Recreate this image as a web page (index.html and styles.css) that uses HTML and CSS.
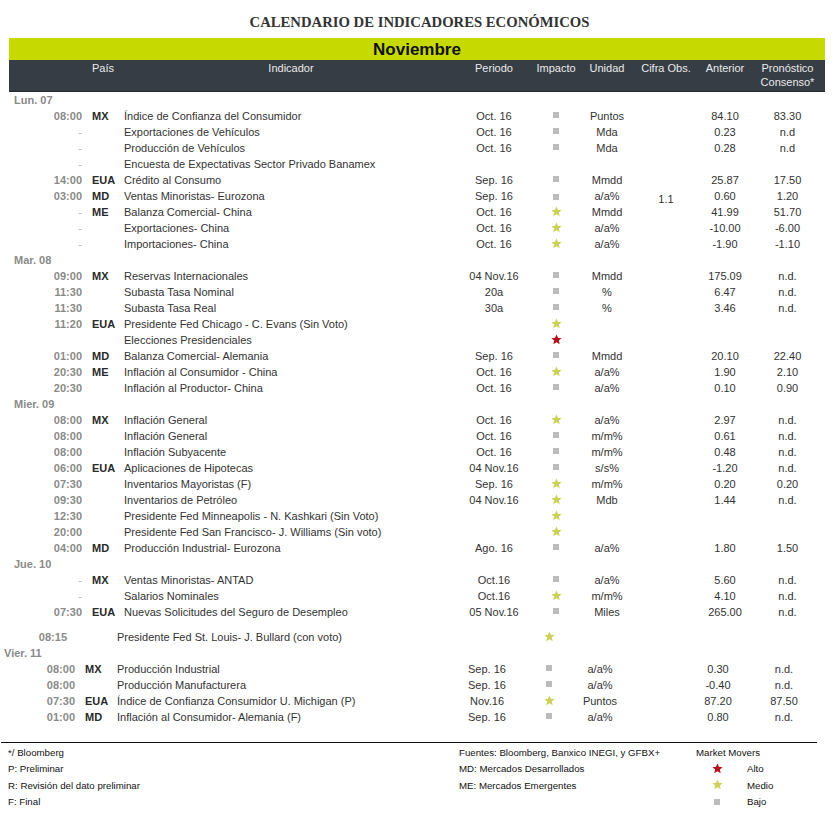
FILE: index.html
```html
<!DOCTYPE html>
<html lang="es">
<head>
<meta charset="utf-8">
<title>Calendario de Indicadores Económicos</title>
<link rel="stylesheet" href="styles.css">
</head>
<body>
<svg class="sprite" aria-hidden="true"><defs><symbol id="star" viewBox="0 0 24 24"><path d="M12 1l3.2 7.4 8 .7-6.1 5.3 1.9 7.9L12 18.1l-7 4.2 1.9-7.9L.8 9.1l8-.7z"/></symbol></defs></svg>
<div class="page">
  <h1 class="title">CALENDARIO DE INDICADORES ECONÓMICOS</h1>
  <div class="table">
    <div class="month">Noviembre</div>
    <div class="row head">
      <span></span><span class="c">País</span><span class="i">Indicador</span><span>Periodo</span><span>Impacto</span><span>Unidad</span><span>Cifra Obs.</span><span>Anterior</span><span>Pronóstico Consenso*</span>
    </div>

    <div class="day">Lun. 07</div>
    <div class="row"><span class="t">08:00</span><span class="c">MX</span><span class="i">Índice de Confianza del Consumidor</span><span>Oct. 16</span><span class="m"><i class="sq"></i></span><span>Puntos</span><span></span><span>84.10</span><span>83.30</span></div>
    <div class="row"><span class="t dash">-</span><span class="c"></span><span class="i">Exportaciones de Vehículos</span><span>Oct. 16</span><span class="m"><i class="sq"></i></span><span>Mda</span><span></span><span>0.23</span><span>n.d</span></div>
    <div class="row"><span class="t dash">-</span><span class="c"></span><span class="i">Producción de Vehículos</span><span>Oct. 16</span><span class="m"><i class="sq"></i></span><span>Mda</span><span></span><span>0.28</span><span>n.d</span></div>
    <div class="row"><span class="t dash">-</span><span class="c"></span><span class="i">Encuesta de Expectativas Sector Privado Banamex</span><span></span><span class="m"></span><span></span><span></span><span></span><span></span></div>
    <div class="row"><span class="t">14:00</span><span class="c">EUA</span><span class="i">Crédito al Consumo</span><span>Sep. 16</span><span class="m"><i class="sq"></i></span><span>Mmdd</span><span></span><span>25.87</span><span>17.50</span></div>
    <div class="row"><span class="t">03:00</span><span class="c">MD</span><span class="i">Ventas Minoristas- Eurozona</span><span>Sep. 16</span><span class="m"><i class="sq"></i></span><span>a/a%</span><span class="low">1.1</span><span>0.60</span><span>1.20</span></div>
    <div class="row"><span class="t dash">-</span><span class="c">ME</span><span class="i">Balanza Comercial- China</span><span>Oct. 16</span><span class="m"><svg class="star med"><use href="#star"/></svg></span><span>Mmdd</span><span></span><span>41.99</span><span>51.70</span></div>
    <div class="row"><span class="t dash">-</span><span class="c"></span><span class="i">Exportaciones- China</span><span>Oct. 16</span><span class="m"><svg class="star med"><use href="#star"/></svg></span><span>a/a%</span><span></span><span>-10.00</span><span>-6.00</span></div>
    <div class="row"><span class="t dash">-</span><span class="c"></span><span class="i">Importaciones- China</span><span>Oct. 16</span><span class="m"><svg class="star med"><use href="#star"/></svg></span><span>a/a%</span><span></span><span>-1.90</span><span>-1.10</span></div>

    <div class="day">Mar. 08</div>
    <div class="row"><span class="t">09:00</span><span class="c">MX</span><span class="i">Reservas Internacionales</span><span>04 Nov.16</span><span class="m"><i class="sq"></i></span><span>Mmdd</span><span></span><span>175.09</span><span>n.d.</span></div>
    <div class="row"><span class="t">11:30</span><span class="c"></span><span class="i">Subasta Tasa Nominal</span><span>20a</span><span class="m"><i class="sq"></i></span><span>%</span><span></span><span>6.47</span><span>n.d.</span></div>
    <div class="row"><span class="t">11:30</span><span class="c"></span><span class="i">Subasta Tasa Real</span><span>30a</span><span class="m"><i class="sq"></i></span><span>%</span><span></span><span>3.46</span><span>n.d.</span></div>
    <div class="row"><span class="t">11:20</span><span class="c">EUA</span><span class="i">Presidente Fed Chicago - C. Evans (Sin Voto)</span><span></span><span class="m"><svg class="star med"><use href="#star"/></svg></span><span></span><span></span><span></span><span></span></div>
    <div class="row"><span class="t"></span><span class="c"></span><span class="i">Elecciones Presidenciales</span><span></span><span class="m"><svg class="star high"><use href="#star"/></svg></span><span></span><span></span><span></span><span></span></div>
    <div class="row"><span class="t">01:00</span><span class="c">MD</span><span class="i">Balanza Comercial- Alemania</span><span>Sep. 16</span><span class="m"><i class="sq"></i></span><span>Mmdd</span><span></span><span>20.10</span><span>22.40</span></div>
    <div class="row"><span class="t">20:30</span><span class="c">ME</span><span class="i">Inflación al Consumidor - China</span><span>Oct. 16</span><span class="m"><svg class="star med"><use href="#star"/></svg></span><span>a/a%</span><span></span><span>1.90</span><span>2.10</span></div>
    <div class="row"><span class="t">20:30</span><span class="c"></span><span class="i">Inflación al Productor- China</span><span>Oct. 16</span><span class="m"><i class="sq"></i></span><span>a/a%</span><span></span><span>0.10</span><span>0.90</span></div>

    <div class="day">Mier. 09</div>
    <div class="row"><span class="t">08:00</span><span class="c">MX</span><span class="i">Inflación General</span><span>Oct. 16</span><span class="m"><svg class="star med"><use href="#star"/></svg></span><span>a/a%</span><span></span><span>2.97</span><span>n.d.</span></div>
    <div class="row"><span class="t">08:00</span><span class="c"></span><span class="i">Inflación General</span><span>Oct. 16</span><span class="m"><i class="sq"></i></span><span>m/m%</span><span></span><span>0.61</span><span>n.d.</span></div>
    <div class="row"><span class="t">08:00</span><span class="c"></span><span class="i">Inflación Subyacente</span><span>Oct. 16</span><span class="m"><i class="sq"></i></span><span>m/m%</span><span></span><span>0.48</span><span>n.d.</span></div>
    <div class="row"><span class="t">06:00</span><span class="c">EUA</span><span class="i">Aplicaciones de Hipotecas</span><span>04 Nov.16</span><span class="m"><i class="sq"></i></span><span>s/s%</span><span></span><span>-1.20</span><span>n.d.</span></div>
    <div class="row"><span class="t">07:30</span><span class="c"></span><span class="i">Inventarios Mayoristas (F)</span><span>Sep. 16</span><span class="m"><svg class="star med"><use href="#star"/></svg></span><span>m/m%</span><span></span><span>0.20</span><span>0.20</span></div>
    <div class="row"><span class="t">09:30</span><span class="c"></span><span class="i">Inventarios de Petróleo</span><span>04 Nov.16</span><span class="m"><svg class="star med"><use href="#star"/></svg></span><span>Mdb</span><span></span><span>1.44</span><span>n.d.</span></div>
    <div class="row"><span class="t">12:30</span><span class="c"></span><span class="i">Presidente Fed Minneapolis - N. Kashkari (Sin Voto)</span><span></span><span class="m"><svg class="star med"><use href="#star"/></svg></span><span></span><span></span><span></span><span></span></div>
    <div class="row"><span class="t">20:00</span><span class="c"></span><span class="i">Presidente Fed San Francisco- J. Williams (Sin voto)</span><span></span><span class="m"><svg class="star med"><use href="#star"/></svg></span><span></span><span></span><span></span><span></span></div>
    <div class="row"><span class="t">04:00</span><span class="c">MD</span><span class="i">Producción Industrial- Eurozona</span><span>Ago. 16</span><span class="m"><i class="sq"></i></span><span>a/a%</span><span></span><span>1.80</span><span>1.50</span></div>

    <div class="day">Jue. 10</div>
    <div class="row"><span class="t dash">-</span><span class="c">MX</span><span class="i">Ventas Minoristas- ANTAD</span><span>Oct.16</span><span class="m"><i class="sq"></i></span><span>a/a%</span><span></span><span>5.60</span><span>n.d.</span></div>
    <div class="row"><span class="t dash">-</span><span class="c"></span><span class="i">Salarios Nominales</span><span>Oct.16</span><span class="m"><svg class="star med"><use href="#star"/></svg></span><span>m/m%</span><span></span><span>4.10</span><span>n.d.</span></div>
    <div class="row"><span class="t">07:30</span><span class="c">EUA</span><span class="i">Nuevas Solicitudes del Seguro de Desempleo</span><span>05 Nov.16</span><span class="m"><i class="sq"></i></span><span>Miles</span><span></span><span>265.00</span><span>n.d.</span></div>
    <div class="row alt gap"><span class="t far">08:15</span><span class="c"></span><span class="i">Presidente Fed St. Louis- J. Bullard (con voto)</span><span></span><span class="m"><svg class="star med"><use href="#star"/></svg></span><span></span><span></span><span></span><span></span></div>

    <div class="day alt">Vier. 11</div>
    <div class="row alt"><span class="t">08:00</span><span class="c">MX</span><span class="i">Producción Industrial</span><span>Sep. 16</span><span class="m"><i class="sq"></i></span><span>a/a%</span><span></span><span>0.30</span><span>n.d.</span></div>
    <div class="row alt"><span class="t">08:00</span><span class="c"></span><span class="i">Producción Manufacturera</span><span>Sep. 16</span><span class="m"><i class="sq"></i></span><span>a/a%</span><span></span><span>-0.40</span><span>n.d.</span></div>
    <div class="row alt"><span class="t">07:30</span><span class="c">EUA</span><span class="i">Índice de Confianza Consumidor U. Michigan (P)</span><span>Nov.16</span><span class="m"><svg class="star med"><use href="#star"/></svg></span><span>Puntos</span><span></span><span>87.20</span><span>87.50</span></div>
    <div class="row alt"><span class="t">01:00</span><span class="c">MD</span><span class="i">Inflación al Consumidor- Alemania (F)</span><span>Sep. 16</span><span class="m"><i class="sq"></i></span><span>a/a%</span><span></span><span>0.80</span><span>n.d.</span></div>
  </div>

  <div class="footer">
    <div class="fcol">
      <div>*/ Bloomberg</div>
      <div>P: Preliminar</div>
      <div>R: Revisión del dato preliminar</div>
      <div>F: Final</div>
    </div>
    <div class="fcol">
      <div>Fuentes: Bloomberg, Banxico INEGI, y GFBX+</div>
      <div>MD: Mercados Desarrollados</div>
      <div>ME: Mercados Emergentes</div>
    </div>
    <div class="fcol legend">
      <div>Market Movers</div>
      <div class="lg"><span class="li"><svg class="star high"><use href="#star"/></svg></span><span>Alto</span></div>
      <div class="lg"><span class="li"><svg class="star med"><use href="#star"/></svg></span><span>Medio</span></div>
      <div class="lg"><span class="li"><i class="sq"></i></span><span>Bajo</span></div>
    </div>
  </div>
</div>
</body>
</html>
```

FILE: styles.css
```css
* { box-sizing: border-box; }

html, body {
  margin: 0;
  padding: 0;
  background: #fff;
}

body {
  font-family: "Liberation Sans", Arial, sans-serif;
  font-size: 11px;
  color: #333;
}

.sprite {
  position: absolute;
  width: 0;
  height: 0;
  overflow: hidden;
}

.page {
  padding-top: 12px;
  width: 839px;
}

.title {
  margin: 0 0 6px 0;
  font-family: "Liberation Serif", "Times New Roman", serif;
  font-weight: bold;
  font-size: 14.7px;
  line-height: 20px;
  color: #333;
  text-align: center;
}

.table {
  margin-left: 9px;
  width: 816px;
}

.month {
  height: 22px;
  background: #c6d900;
  color: #111;
  font-weight: bold;
  font-size: 17px;
  line-height: 23px;
  text-align: center;
}

.row {
  display: grid;
  grid-template-columns: 73px 42px 334px 72px 52px 50px 68px 50px 75px;
  height: 16px;
  line-height: 16px;
  white-space: nowrap;
}

.row > span {
  text-align: center;
}

.row.alt {
  grid-template-columns: 66px 42px 334px 72px 52px 50px 68px 50px 82px;
}

.row.gap {
  margin-top: 9px;
}

.row .t {
  text-align: right;
  color: #8a8a8a;
  font-weight: bold;
}

.row .t.dash {
  color: #b0b0b0;
  font-weight: normal;
}

.row .t.far {
  padding-right: 8px;
}

.row .c {
  text-align: left;
  padding-left: 10px;
  font-weight: bold;
  color: #2a2a2a;
}

.row .i {
  text-align: left;
  color: #333;
}

.row .low {
  margin-top: 3px;
}

.row .m {
  display: flex;
  align-items: center;
  justify-content: center;
}

.row.head {
  height: 32px;
  background: #363d45;
  border-bottom: 1px solid #22282e;
  color: #eaeaea;
  line-height: 14px;
  padding-top: 1px;
  white-space: normal;
}

.row.head .c {
  padding-left: 10px;
  font-weight: normal;
  color: #eaeaea;
}

.row.head .i {
  text-align: center;
  color: #eaeaea;
}

.day {
  height: 16px;
  line-height: 16px;
  padding-left: 5px;
  color: #8a8a8a;
  font-weight: bold;
}

.day.alt {
  padding-left: 0;
  margin-left: -5px;
}

.sq {
  display: inline-block;
  width: 6px;
  height: 6px;
  background: #bcbcbc;
  margin-top: -2px;
}

.star {
  width: 11px;
  height: 11px;
  margin-top: -1px;
}

.star.med { fill: #cdd05a; }
.star.high { fill: #b3111c; }

.footer {
  margin-top: 17px;
  margin-left: 1px;
  width: 816px;
  border-top: 1px solid #111;
  padding: 2px 0 0 7px;
  display: grid;
  grid-template-columns: 451px 237px 1fr;
  font-size: 9.7px;
  line-height: 16.3px;
  color: #111;
}

.fcol > div {
  height: 16.3px;
}

.lg {
  display: flex;
  align-items: center;
}

.li {
  width: 40px;
  display: flex;
  justify-content: center;
  padding-left: 2px;
  margin-right: 11px;
}

.lg .sq { margin-top: 0; }
.lg .star { margin-top: -2px; }
```
